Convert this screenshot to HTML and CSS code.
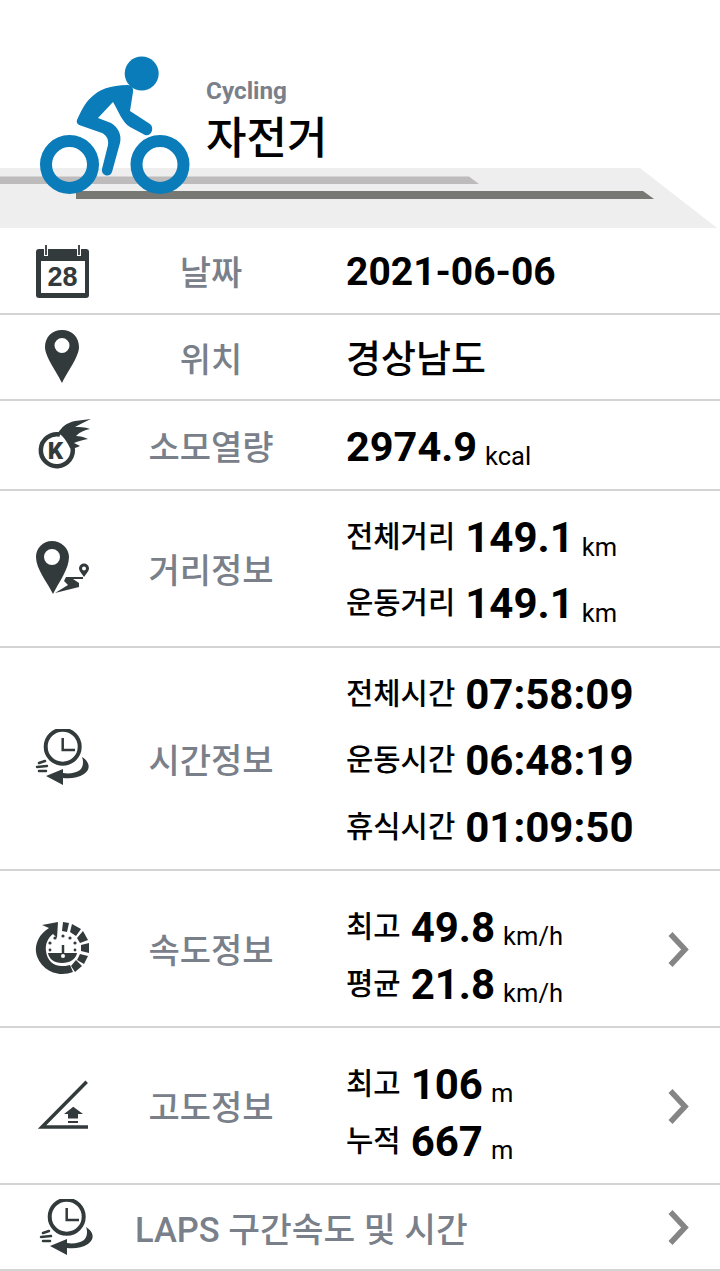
FILE: index.html
```html
<!DOCTYPE html>
<html lang="ko">
<head>
<meta charset="utf-8">
<title>자전거</title>
<link rel="stylesheet" href="styles.css">
</head>
<body>
<header class="hero">
  <svg class="hero-band" viewBox="0 168 720 60" aria-hidden="true">
    <polygon points="0,168 640,168 717,228 0,228" fill="#eeeeee"/>
    <polygon points="0,176.500 469,176.500 479,184 0,184" fill="#bdbbbb"/>
    <polygon points="76,191 643,191 654,199 76,199" fill="#777874"/>
  </svg>
  <svg class="hero-bike" viewBox="36 52 160 146" aria-hidden="true">
    <circle cx="141.700" cy="73.500" r="17" fill="#0a7cba"/>
    <circle cx="69.500" cy="164.500" r="23.500" fill="none" stroke="#0a7cba" stroke-width="12"/>
    <circle cx="160" cy="164.500" r="23.500" fill="none" stroke="#0a7cba" stroke-width="12"/>
    <path d="M77 120C84 105 92 85 128 85C131 85 134 88 133 92L130 111L150 124C155 128 151 137 145 135L130 127C122 122 119 112 113 102L98 118L111 123C118 127 122 135 120 143L112 172C110 178 101 176 102 169L108 145C109 139 106 135 102 133L82 126C78 125 76 123 77 120Z" fill="#0a7cba"/>
  </svg>
  <div class="hero-title">
    <div class="hero-en">Cycling</div>
    <div class="hero-ko">자전거</div>
  </div>
</header>

<section class="row row-date">
  <svg class="ico" viewBox="31 240 60 60" aria-hidden="true">
    <rect x="36" y="248" width="53" height="49" rx="3" fill="#333a3c"/>
    <rect x="41" y="260" width="44" height="32" fill="#fff"/>
    <path d="M46 244V255M79 244V255" stroke="#fff" stroke-width="4"/>
    <path d="M46 244V254M79 244V254" stroke="#333a3c" stroke-width="1.800"/>
    <text x="62.500" y="285" class="ico-num">28</text>
  </svg>
  <div class="label">날짜</div>
  <div class="val"><b class="big">2021-06-06</b></div>
</section>

<section class="row row-loc">
  <svg class="ico" viewBox="31 328 60 60" aria-hidden="true">
    <path fill-rule="evenodd" d="M62 331C52 331 45 338 45 348C45 358 57 373 62 384C67 373 79 358 79 348C79 338 72 331 62 331ZM62 339A7.500 7.500 0 1 1 62 354A7.500 7.500 0 1 1 62 339Z" fill="#333a3c"/>
  </svg>
  <div class="label">위치</div>
  <div class="val"><span class="place">경상남도</span></div>
</section>

<section class="row row-cal">
  <svg class="ico" viewBox="31 416 60 60" aria-hidden="true">
    <path d="M60 435.500A16 16 0 1 0 72.500 448" fill="none" stroke="#333a3c" stroke-width="4.500"/>
    <text x="55.500" y="460" class="ico-k">K</text>
    <path d="M58 434C62 428 66 424 75 422L91 420C85 423 80 425 75 428C79 428 85 428 90 430C84 431 80 433 76 437C80 437 84 438 88 440C83 441 78 442 74 444C76 445 78 446 80 447C76 449 72 450 70 449C68 445 66 441 63 438C62 437 60 435 58 434Z" fill="#333a3c"/>
  </svg>
  <div class="label">소모열량</div>
  <div class="val"><b class="big big-cal">2974.9</b><span class="unit">kcal</span></div>
</section>

<section class="row row-dist">
  <svg class="ico" viewBox="31 540 60 60" aria-hidden="true">
    <path fill-rule="evenodd" d="M52 542C43 542 36 549 36 558C36 570 47 583 53 595C59 583 69 570 69 558C69 549 61 542 52 542ZM52 550A8 8 0 1 1 52 566A8 8 0 1 1 52 550Z" fill="#333a3c"/>
    <path fill-rule="evenodd" d="M84 564.500A5 5 0 0 1 89 569.500C89 572 86 575 84 578C82 575 79 572 79 569.500A5 5 0 0 1 84 564.500ZM84 567.500A2 2 0 1 0 84 571.500A2 2 0 1 0 84 567.500Z" fill="#333a3c"/>
    <path d="M83 578V580H73L79 584V588L55 594L68 586L64 582L66 578Z" fill="#333a3c"/>
  </svg>
  <div class="label">거리정보</div>
  <div class="val val-stack">
    <div class="line"><span class="key">전체거리</span><b class="num">149.1</b><span class="unit">km</span></div>
    <div class="line"><span class="key">운동거리</span><b class="num">149.1</b><span class="unit">km</span></div>
  </div>
</section>

<section class="row row-time">
  <svg class="ico" viewBox="31 729 60 60" aria-hidden="true">
    <circle cx="62.700" cy="746.700" r="17" fill="none" stroke="#333a3c" stroke-width="4"/>
    <path d="M62.700 738V750H75" fill="none" stroke="#333a3c" stroke-width="2.500"/>
    <path d="M82 757C90 762 91 769 84 774C78 778 70 779 63 778V785L46 776L63 769V773C69 774 76 773 80 770C83 767 84 762 82 757Z" fill="#333a3c"/>
    <path d="M39 763L45 761M37 767L47 766M39 771L46 771" stroke="#333a3c" stroke-width="2.500" stroke-linecap="round"/>
  </svg>
  <div class="label">시간정보</div>
  <div class="val val-stack">
    <div class="line"><span class="key">전체시간</span><b class="num">07:58:09</b></div>
    <div class="line"><span class="key">운동시간</span><b class="num">06:48:19</b></div>
    <div class="line"><span class="key">휴식시간</span><b class="num">01:09:50</b></div>
  </div>
</section>

<section class="row row-speed">
  <svg class="ico" viewBox="31 919 60 60" aria-hidden="true">
    <path d="M49 928C39 934 35 944 36 952C38 965 50 974 62 974C66 974 70 973 73 972L70 965C67 966 64 966 62 966C53 966 47 960 46 951C45 944 48 938 53 934L57 938L58 922L42 925Z" fill="#333a3c"/>
    <path d="M63 922L69 923L67 932L62 931ZM72 924L81 929L76 936L70 932ZM83 931L88 940L80 943L77 938ZM89 943V953L81 951V945ZM88 956L84 964L77 960L80 954ZM82 966L75 972L71 966L76 960Z" fill="#333a3c"/>
    <path d="M48 953H77C76 959 70 963 62 963C54 963 49 959 48 953Z" fill="#333a3c"/>
    <path d="M63 945V954" stroke="#333a3c" stroke-width="2.500"/>
    <circle cx="63" cy="956" r="2" fill="#fff"/>
    <g fill="#333a3c">
      <circle cx="50" cy="943" r="1.600"/>
      <circle cx="55" cy="938" r="1.600"/>
      <circle cx="63" cy="936" r="1.600"/>
      <circle cx="70" cy="938" r="1.600"/>
      <circle cx="75" cy="943" r="1.600"/>
      <circle cx="50" cy="950" r="1.400"/>
      <circle cx="75" cy="950" r="1.400"/>
    </g>
  </svg>
  <div class="label">속도정보</div>
  <div class="val val-pair">
    <div class="line"><span class="key">최고</span><b class="num">49.8</b><span class="unit">km/h</span></div>
    <div class="line"><span class="key">평균</span><b class="num">21.8</b><span class="unit">km/h</span></div>
  </div>
  <svg class="chev" viewBox="0 0 26 40" aria-hidden="true"><path d="M3.500 5L18 20.500L3.500 36" fill="none" stroke="#858585" stroke-width="5.500"/></svg>
</section>

<section class="row row-alt">
  <svg class="ico" viewBox="31 1076 60 60" aria-hidden="true">
    <path d="M86.700 1081.700L42 1127H88" fill="none" stroke="#333a3c" stroke-width="3.500"/>
    <path d="M73.300 1106.700L83 1114H78V1118.500H68V1114H64Z" fill="#333a3c"/>
    <path d="M68 1122H78" stroke="#333a3c" stroke-width="2"/>
  </svg>
  <div class="label">고도정보</div>
  <div class="val val-pair">
    <div class="line"><span class="key">최고</span><b class="num">106</b><span class="unit">m</span></div>
    <div class="line"><span class="key">누적</span><b class="num">667</b><span class="unit">m</span></div>
  </div>
  <svg class="chev" viewBox="0 0 26 40" aria-hidden="true"><path d="M3.500 5L18 20.500L3.500 36" fill="none" stroke="#858585" stroke-width="5.500"/></svg>
</section>

<section class="row row-laps">
  <svg class="ico ico-laps" viewBox="31 729 60 60" aria-hidden="true">
    <circle cx="62.700" cy="746.700" r="17" fill="none" stroke="#333a3c" stroke-width="4"/>
    <path d="M62.700 738V750H75" fill="none" stroke="#333a3c" stroke-width="2.500"/>
    <path d="M82 757C90 762 91 769 84 774C78 778 70 779 63 778V785L46 776L63 769V773C69 774 76 773 80 770C83 767 84 762 82 757Z" fill="#333a3c"/>
    <path d="M39 763L45 761M37 767L47 766M39 771L46 771" stroke="#333a3c" stroke-width="2.500" stroke-linecap="round"/>
  </svg>
  <div class="label label-wide">LAPS 구간속도 및 시간</div>
  <svg class="chev" viewBox="0 0 26 40" aria-hidden="true"><path d="M3.500 5L18 20.500L3.500 36" fill="none" stroke="#858585" stroke-width="5.500"/></svg>
</section>
</body>
</html>
```

FILE: styles.css
```css
* { box-sizing: border-box; }

html, body {
  margin: 0;
  padding: 0;
  background: #fff;
}

body {
  width: 720px;
  font-family: Roboto, "Noto Sans CJK KR", sans-serif;
  color: #000;
}

.hero {
  position: relative;
  height: 228px;
  display: flex;
  align-items: flex-start;
  padding: 52px 0 0 36px;
}

.hero-band {
  position: absolute;
  left: 0;
  bottom: 0;
  width: 720px;
  height: 60px;
}

.hero-bike {
  position: relative;
  width: 160px;
  height: 146px;
  flex: none;
}

.hero-title {
  position: relative;
  margin: 24px 0 0 10px;
}

.hero-en {
  font-size: 24.300px;
  line-height: 30px;
  font-weight: 700;
  color: #7a808a;
}

.hero-ko {
  font-family: "Noto Sans CJK KR", sans-serif;
  font-size: 44px;
  line-height: 52px;
  font-weight: 500;
  margin-top: 3px;
}

.row {
  display: grid;
  grid-template-columns: 122px 178px 47px 1fr 60px;
  align-items: center;
  border-bottom: 2px solid #d4d4d4;
}

.row-date { height: 87px; }
.row-loc { height: 86px; }
.row-cal { height: 90px; }
.row-dist { height: 157px; }
.row-time { height: 223px; }
.row-speed { height: 157px; }
.row-alt { height: 157px; }
.row-laps { height: 86px; }

.ico {
  grid-column: 1;
  justify-self: center;
  width: 60px;
  height: 60px;
}

.ico-laps {
  margin: 4px 0 0 8px;
}

.ico-num {
  font-family: "Liberation Sans", sans-serif;
  font-size: 27px;
  font-weight: 700;
  fill: #333a3c;
  text-anchor: middle;
}

.ico-k {
  font-family: Roboto, sans-serif;
  font-size: 24px;
  font-weight: 900;
  fill: #333a3c;
  text-anchor: middle;
}

.label {
  grid-column: 2;
  text-align: center;
  font-size: 34px;
  font-weight: 500;
  color: #7a808a;
}

.label-wide {
  grid-column: 2 / 5;
  text-align: left;
  margin-left: 13px;
  font-size: 34.500px;
}

.val {
  grid-column: 4;
  display: flex;
  align-items: baseline;
  white-space: nowrap;
  padding-top: 3px;
  margin-left: -1px;
}

.val-stack,
.val-pair {
  flex-direction: column;
  align-items: flex-start;
}

.val-stack { padding-top: 4px; }
.val-pair { padding-top: 14px; }

.big {
  font-size: 39px;
  font-weight: 700;
}

.big-cal {
  font-size: 41.500px;
}

.place {
  font-family: "Noto Sans CJK KR", sans-serif;
  font-size: 38px;
  font-weight: 500;
  margin-bottom: 6px;
}

.line {
  display: flex;
  align-items: center;
}

.val-stack .line { height: 66.500px; }
.val-pair .line { height: 57px; }

.key {
  font-family: "Noto Sans CJK KR", sans-serif;
  font-size: 29.700px;
  font-weight: 500;
  margin: 0 10px 6px 0;
}

.num {
  font-size: 42px;
  font-weight: 700;
}

.unit {
  font-size: 25.500px;
  margin-left: 8px;
  align-self: flex-end;
}

.val-stack .unit {
  margin-bottom: 9px;
}

.val-pair .unit {
  margin-bottom: 4.500px;
}

.chev {
  grid-column: 5;
  width: 26px;
  height: 40px;
  margin-left: 7px;
}
```
